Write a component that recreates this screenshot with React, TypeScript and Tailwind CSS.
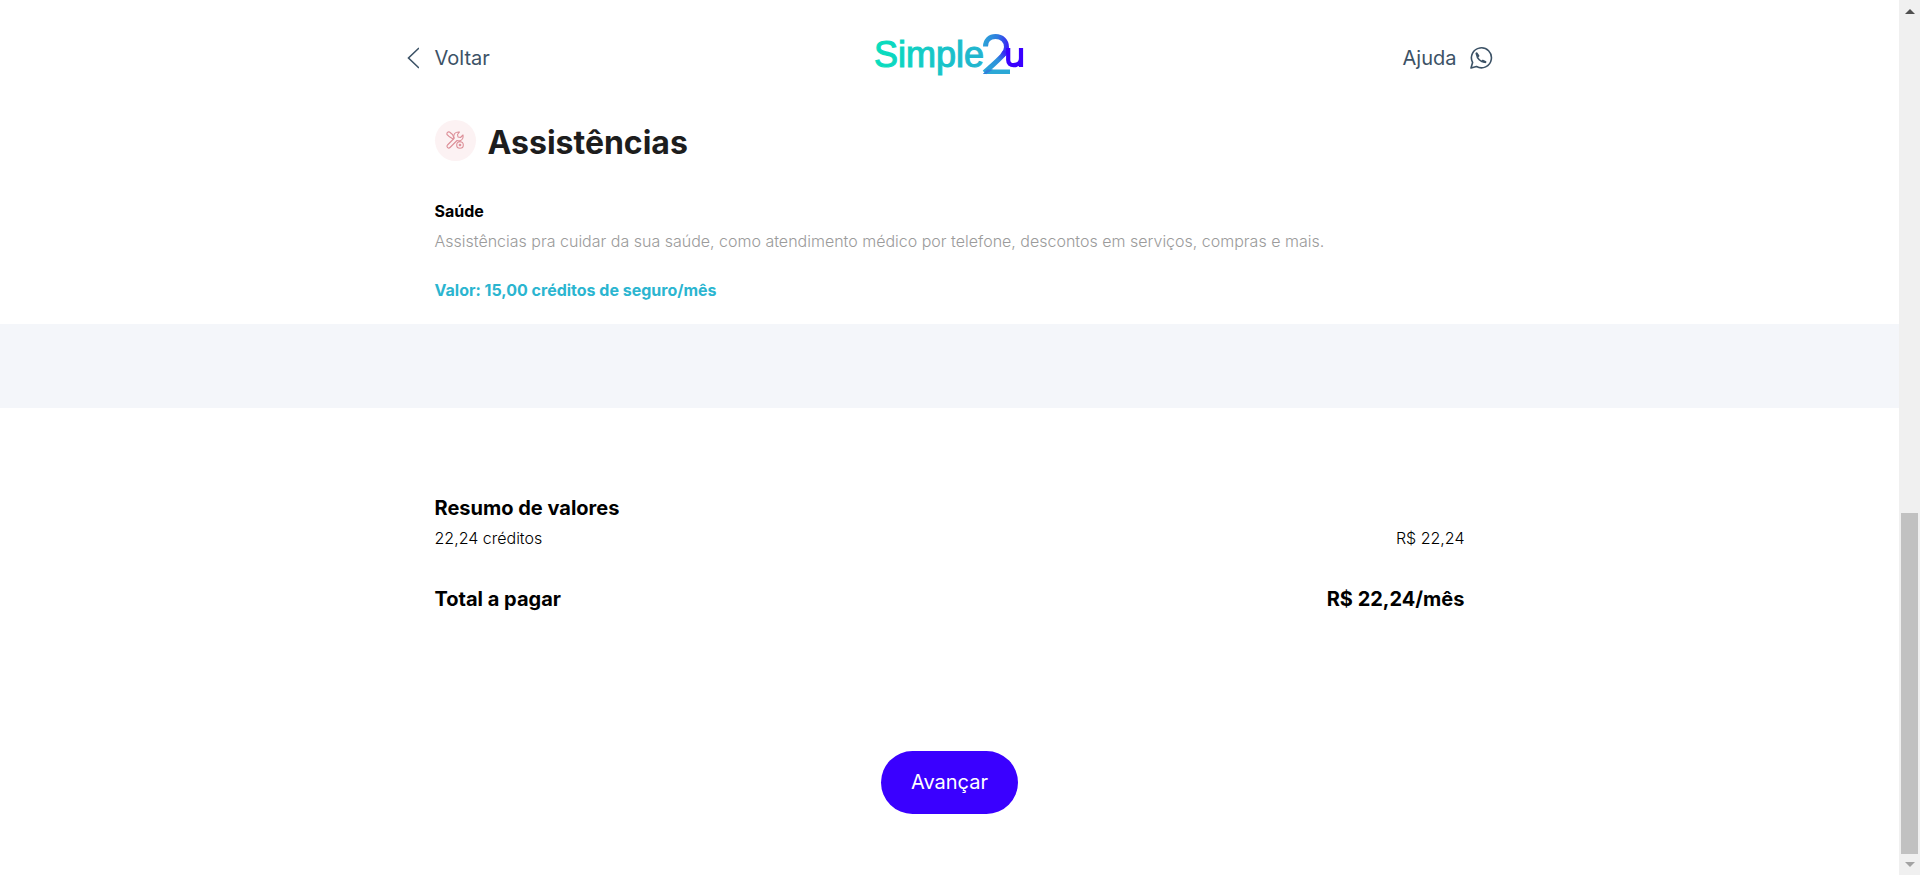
import type { ReactNode } from "react";

function Logo() {
  return (
    <svg width="152" height="44" viewBox="0 0 152 44" role="img" aria-label="Simple2u">
      <defs>
        <linearGradient id="word" gradientUnits="userSpaceOnUse" x1="0" y1="0" x2="110" y2="0">
          <stop offset="0" stopColor="#07dfbd" />
          <stop offset="1" stopColor="#22b3d0" />
        </linearGradient>
        <linearGradient id="two" gradientUnits="userSpaceOnUse" x1="108" y1="14" x2="136" y2="18">
          <stop offset="0" stopColor="#2ba6d8" />
          <stop offset="0.5" stopColor="#2f7bdf" />
          <stop offset="1" stopColor="#3a10fa" />
        </linearGradient>
        <linearGradient id="leg" gradientUnits="userSpaceOnUse" x1="112" y1="40" x2="134" y2="20">
          <stop offset="0" stopColor="#2ba8d6" />
          <stop offset="0.6" stopColor="#2d8edc" />
          <stop offset="1" stopColor="#3a10fa" />
        </linearGradient>
      </defs>
      <text x="0" y="34" className="font-['Liberation_Sans',sans-serif] text-[36px]" fill="url(#word)" stroke="url(#word)" strokeWidth="1.100">Simple</text>
      <path d="M111.500 13.500C111.500 7 116 3.500 121.500 3.500C128 3.500 132.500 8 132.500 14C132.500 17.500 131 20 128.500 22.500" fill="none" stroke="url(#two)" strokeWidth="5" />
      <path d="M131.500 18.500C129 24 118 32 110.500 39.500" fill="none" stroke="url(#leg)" strokeWidth="5" />
      <path d="M109 41L115 36.500H136V41Z" fill="#2ba8d6" />
      <path d="M109 41L113 36.500H119L112 41Z" fill="#3180dc" />
      <path d="M134.200 15V27C134.200 30.500 136.500 32.200 139.500 32.200C143.500 32.200 147 30 147 25V15V34" fill="none" stroke="#3a00ff" strokeWidth="4.200" />
    </svg>
  );
}

function ToolsIcon() {
  return (
    <svg width="18" height="18" viewBox="0 0 18 18" fill="none" stroke="#dc8f98" strokeWidth="1.100" strokeLinecap="round" strokeLinejoin="round" aria-hidden="true">
      <path d="M7 8L3.500 5.800L1 3.500C.500 1.500 2 .500 3.500 1L6.500 3.500L8 7" />
      <path d="M8 7.200C7 3.500 9 .500 13.500 1L11.500 3.500L12 6L14.500 6.500L17 4C17.500 7 16 9.500 13 10L11 9.500L4 16.500C2.500 18 0 16 1.500 14L8 7.500" />
      <path d="M13 10L14 10.600" />
      <circle cx="14" cy="14" r="3.300" />
      <circle cx="14" cy="14" r=".8" />
    </svg>
  );
}

function WhatsAppIcon() {
  return (
    <svg width="24" height="24" viewBox="0 0 24 24" fill="none" stroke="#3c5266" strokeWidth="1.600" strokeLinejoin="round" aria-hidden="true">
      <path d="M2 22L3.600 16.500A10 10 0 1 1 7.500 20.500Z" />
      <path d="M7.600 8.200C8 12.500 11.500 16 15.800 16.300" strokeLinecap="round" />
      <path d="M7.600 7.500L9.300 9.800M13.600 14.800L16.300 16" strokeWidth="2.200" strokeLinecap="round" />
    </svg>
  );
}

function SummaryRow({ label, value, className }: { label: ReactNode; value: string; className: string }) {
  return (
    <div className={"flex justify-between " + className}>
      <dt>{label}</dt>
      <dd>{value}</dd>
    </div>
  );
}

function ScrollBar() {
  return (
    <div className="flex w-[21px] shrink-0 flex-col items-center justify-between bg-[#f0f0f0]" aria-hidden="true">
      <svg className="mt-2" width="10" height="6" viewBox="0 0 10 6"><path d="M0 6L5 1L10 6Z" fill="#505050" /></svg>
      <div className="mt-auto h-[39vh] w-[17px] bg-[#c1c1c1]" />
      <svg className="mt-2 mb-2" width="10" height="5" viewBox="0 0 10 5"><path d="M0 0L5 5L10 0Z" fill="#a3a3a3" /></svg>
    </div>
  );
}

export default function App() {
  return (
    <div className="flex min-h-screen bg-white font-['Inter',sans-serif] text-black">
      <div className="flex-1">
        <header className="mx-auto grid max-w-[1086px] grid-cols-3 items-center pt-[33px]">
          <a href="#voltar" className="flex items-center gap-4 pt-1.5 text-xl text-[#3c5266]">
            <svg width="12" height="22" viewBox="0 0 12 22" fill="none" stroke="#3c5266" strokeWidth="1.600" aria-hidden="true">
              <path d="M12 1L1.500 11L12 21" />
            </svg>
            Voltar
          </a>
          <div className="flex justify-center"><Logo /></div>
          <a href="#ajuda" className="flex items-center justify-end gap-3 pt-1.5 text-xl text-[#3c5266]">
            Ajuda
            <WhatsAppIcon />
          </a>
        </header>
        <main>
          <section className="mx-auto max-w-[1030px] pt-10 pb-[22px]">
            <div className="flex items-center gap-3">
              <span className="flex size-[41px] items-center justify-center rounded-full bg-[#fcf2f3]"><ToolsIcon /></span>
              <h1 className="pt-1.5 text-[32px] leading-10 font-bold text-[#1d1d1d]">Assistências</h1>
            </div>
            <h2 className="mt-9 text-base font-bold">Saúde</h2>
            <p className="mt-1.5 text-base font-light text-[#9b9b9b]">
              Assistências pra cuidar da sua saúde, como atendimento médico por telefone, descontos em serviços, compras e mais.
            </p>
            <p className="mt-[25px] text-base font-bold text-[#2bb5d0]">Valor: 15,00 créditos de seguro/mês</p>
          </section>
          <div className="h-[84px] bg-[#f4f6fa]" />
          <section className="mx-auto max-w-[1030px] pt-[86px]">
            <h2 className="text-xl font-bold">Resumo de valores</h2>
            <dl>
              <SummaryRow label="22,24 créditos" value="R$ 22,24" className="mt-1 text-base font-light" />
              <SummaryRow label="Total a pagar" value="R$ 22,24/mês" className="mt-[35px] text-xl font-bold" />
            </dl>
          </section>
          <div className="flex justify-center pt-[138px] pb-12">
            <button type="button" className="rounded-full bg-[#3a00ff] px-[30px] py-[18px] text-xl leading-[27px] text-white">Avançar</button>
          </div>
        </main>
      </div>
      <ScrollBar />
    </div>
  );
}
